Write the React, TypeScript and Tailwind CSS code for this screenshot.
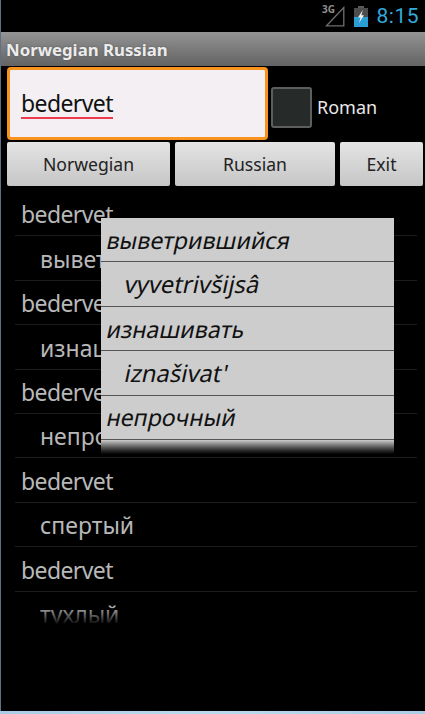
const rows = [
  { text: 'bedervet', sub: false },
  { text: 'выветрившийся', sub: true },
  { text: 'bedervet', sub: false },
  { text: 'изнашивать', sub: true },
  { text: 'bedervet', sub: false },
  { text: 'непрочный', sub: true },
  { text: 'bedervet', sub: false },
  { text: 'спертый', sub: true },
  { text: 'bedervet', sub: false },
  { text: 'тухлый', sub: true },
];

const popupRows = [
  { text: 'выветрившийся', sub: false },
  { text: 'vyvetrivšijsâ', sub: true },
  { text: 'изнашивать', sub: false },
  { text: "iznašivat'", sub: true },
  { text: 'непрочный', sub: false },
  { text: 'nepročnyj', sub: true },
];

// Сигнал 3G и батарея в статус-баре
const SignalIcon = () => (
  <svg width="20" height="21" viewBox="0 0 20 21" className="block">
    <path d="M1.5 19.8 L18.8 1.5 V19.8 Z" fill="none" stroke="#6e6e6e" strokeWidth="1.3" />
  </svg>
);

const BatteryIcon = () => (
  <svg width="14" height="21" viewBox="0 0 14 21" className="block">
    <rect x="4" y="0" width="6" height="2" fill="#5a5a5a" />
    <rect x="0" y="2" width="14" height="19" fill="#4d4d4d" />
    <rect x="0" y="11" width="14" height="10" fill="#2a9fd6" />
    <path d="M8.8 4 L4 11.5 H6.6 L5 17 L10 9.2 H7.4 Z" fill="#f2f2f2" />
  </svg>
);

function MenuButton({ label, className }: { label: string; className: string }) {
  return (
    <button className={`h-[44px] rounded-[2px] bg-gradient-to-b from-[#e4e4e4] to-[#c6c6c6] text-[17.6px] text-[#222222] ${className}`}>
      {label}
    </button>
  );
}

export default function App() {
  return (
    <div className="relative w-[425px] h-[714px] bg-black overflow-hidden font-['Noto_Sans','Open_Sans',sans-serif] flex flex-col">
      {/* Статус-бар */}
      <div className="h-[32px] shrink-0 flex items-center justify-end pr-[6px] relative">
        <span className="absolute left-[322px] top-[4px] text-[10px] font-bold leading-none text-[#8f8f8f]">3G</span>
        <div className="mr-[9px]"><SignalIcon /></div>
        <div className="mr-[9px]"><BatteryIcon /></div>
        <span className="text-[21px] leading-none text-[#33a9dc] font-['Roboto',sans-serif] tracking-[0.5px]">8:15</span>
      </div>

      {/* Заголовок */}
      <div className="h-[34px] shrink-0 bg-gradient-to-b from-[#949494] to-[#636363] flex items-center pl-[6px] pt-[2px] text-[16.8px] font-bold text-[#ececec] [text-shadow:0_0_2px_#555555]">
        Norwegian Russian
      </div>

      {/* Поиск */}
      <div className="h-[76px] shrink-0 flex items-start pt-[1px] pl-[7px]">
        <div className="w-[261px] h-[73px] rounded-[4px] border-[3px] border-[#f7931e] bg-[#f3eff3] flex items-center pl-[11px] pt-[1px]">
          <span className="text-[23px] leading-[28px] tracking-[-0.6px] text-[#111111] border-b-2 border-[#ee3b4c]">bedervet</span>
        </div>
        <div className="ml-[3px] mt-[20px] w-[41px] h-[41px] rounded-[3px] border-2 border-[#5e5e5e] bg-[#262a28]" />
        <span className="ml-[5px] mt-[27px] text-[18px] text-[#e8e8e8]">Roman</span>
      </div>

      {/* Кнопки */}
      <div className="shrink-0 flex pl-[7px] gap-[5px] mb-[6px]">
        <MenuButton label="Norwegian" className="w-[163px]" />
        <MenuButton label="Russian" className="w-[160px]" />
        <MenuButton label="Exit" className="w-[83px]" />
      </div>

      {/* Список */}
      <div className="relative h-[433px] shrink-0 overflow-hidden">
        {rows.map((row, i) => (
          <div
            key={i}
            className={`h-[44.4px] ml-[15px] mr-[8px] border-b border-[#1c1c1c] flex items-center pt-[2px] text-[#b8b8b8] ${row.sub ? 'pl-[25px] text-[23px]' : 'pl-[6px] text-[23px] tracking-[-0.6px]'}`}
          >
            {row.text}
          </div>
        ))}
        <div className="absolute left-0 right-0 top-[414px] h-[19px] bg-gradient-to-b from-transparent to-black" />
      </div>

      {/* Всплывающий список */}
      <div className="absolute left-[101px] top-[218px] w-[293px] h-[238px] overflow-hidden bg-[#cdcdcd]">
        {popupRows.map((row, i) => (
          <div
            key={i}
            className={`h-[44.4px] border-b border-[#555555] flex items-center pt-[1px] text-[#111111] ${row.sub ? 'pl-[24px] text-[23.8px]' : 'pl-[6px] text-[23.3px]'}`}
          >
            <span className="inline-block -skew-x-12">{row.text}</span>
          </div>
        ))}
        <div className="absolute left-0 right-0 bottom-0 h-[16px] bg-gradient-to-b from-[#cdcdcd] to-black" />
      </div>

      {/* Край окна */}
      <div className="absolute left-0 top-0 w-[1px] h-[711px] bg-[#5d7186]" />
      <div className="absolute left-0 top-[711px] w-[425px] h-[3px] bg-gradient-to-r from-[#a9cde8] via-[#b9d9ef] to-[#a9cde8]" />
    </div>
  );
}
